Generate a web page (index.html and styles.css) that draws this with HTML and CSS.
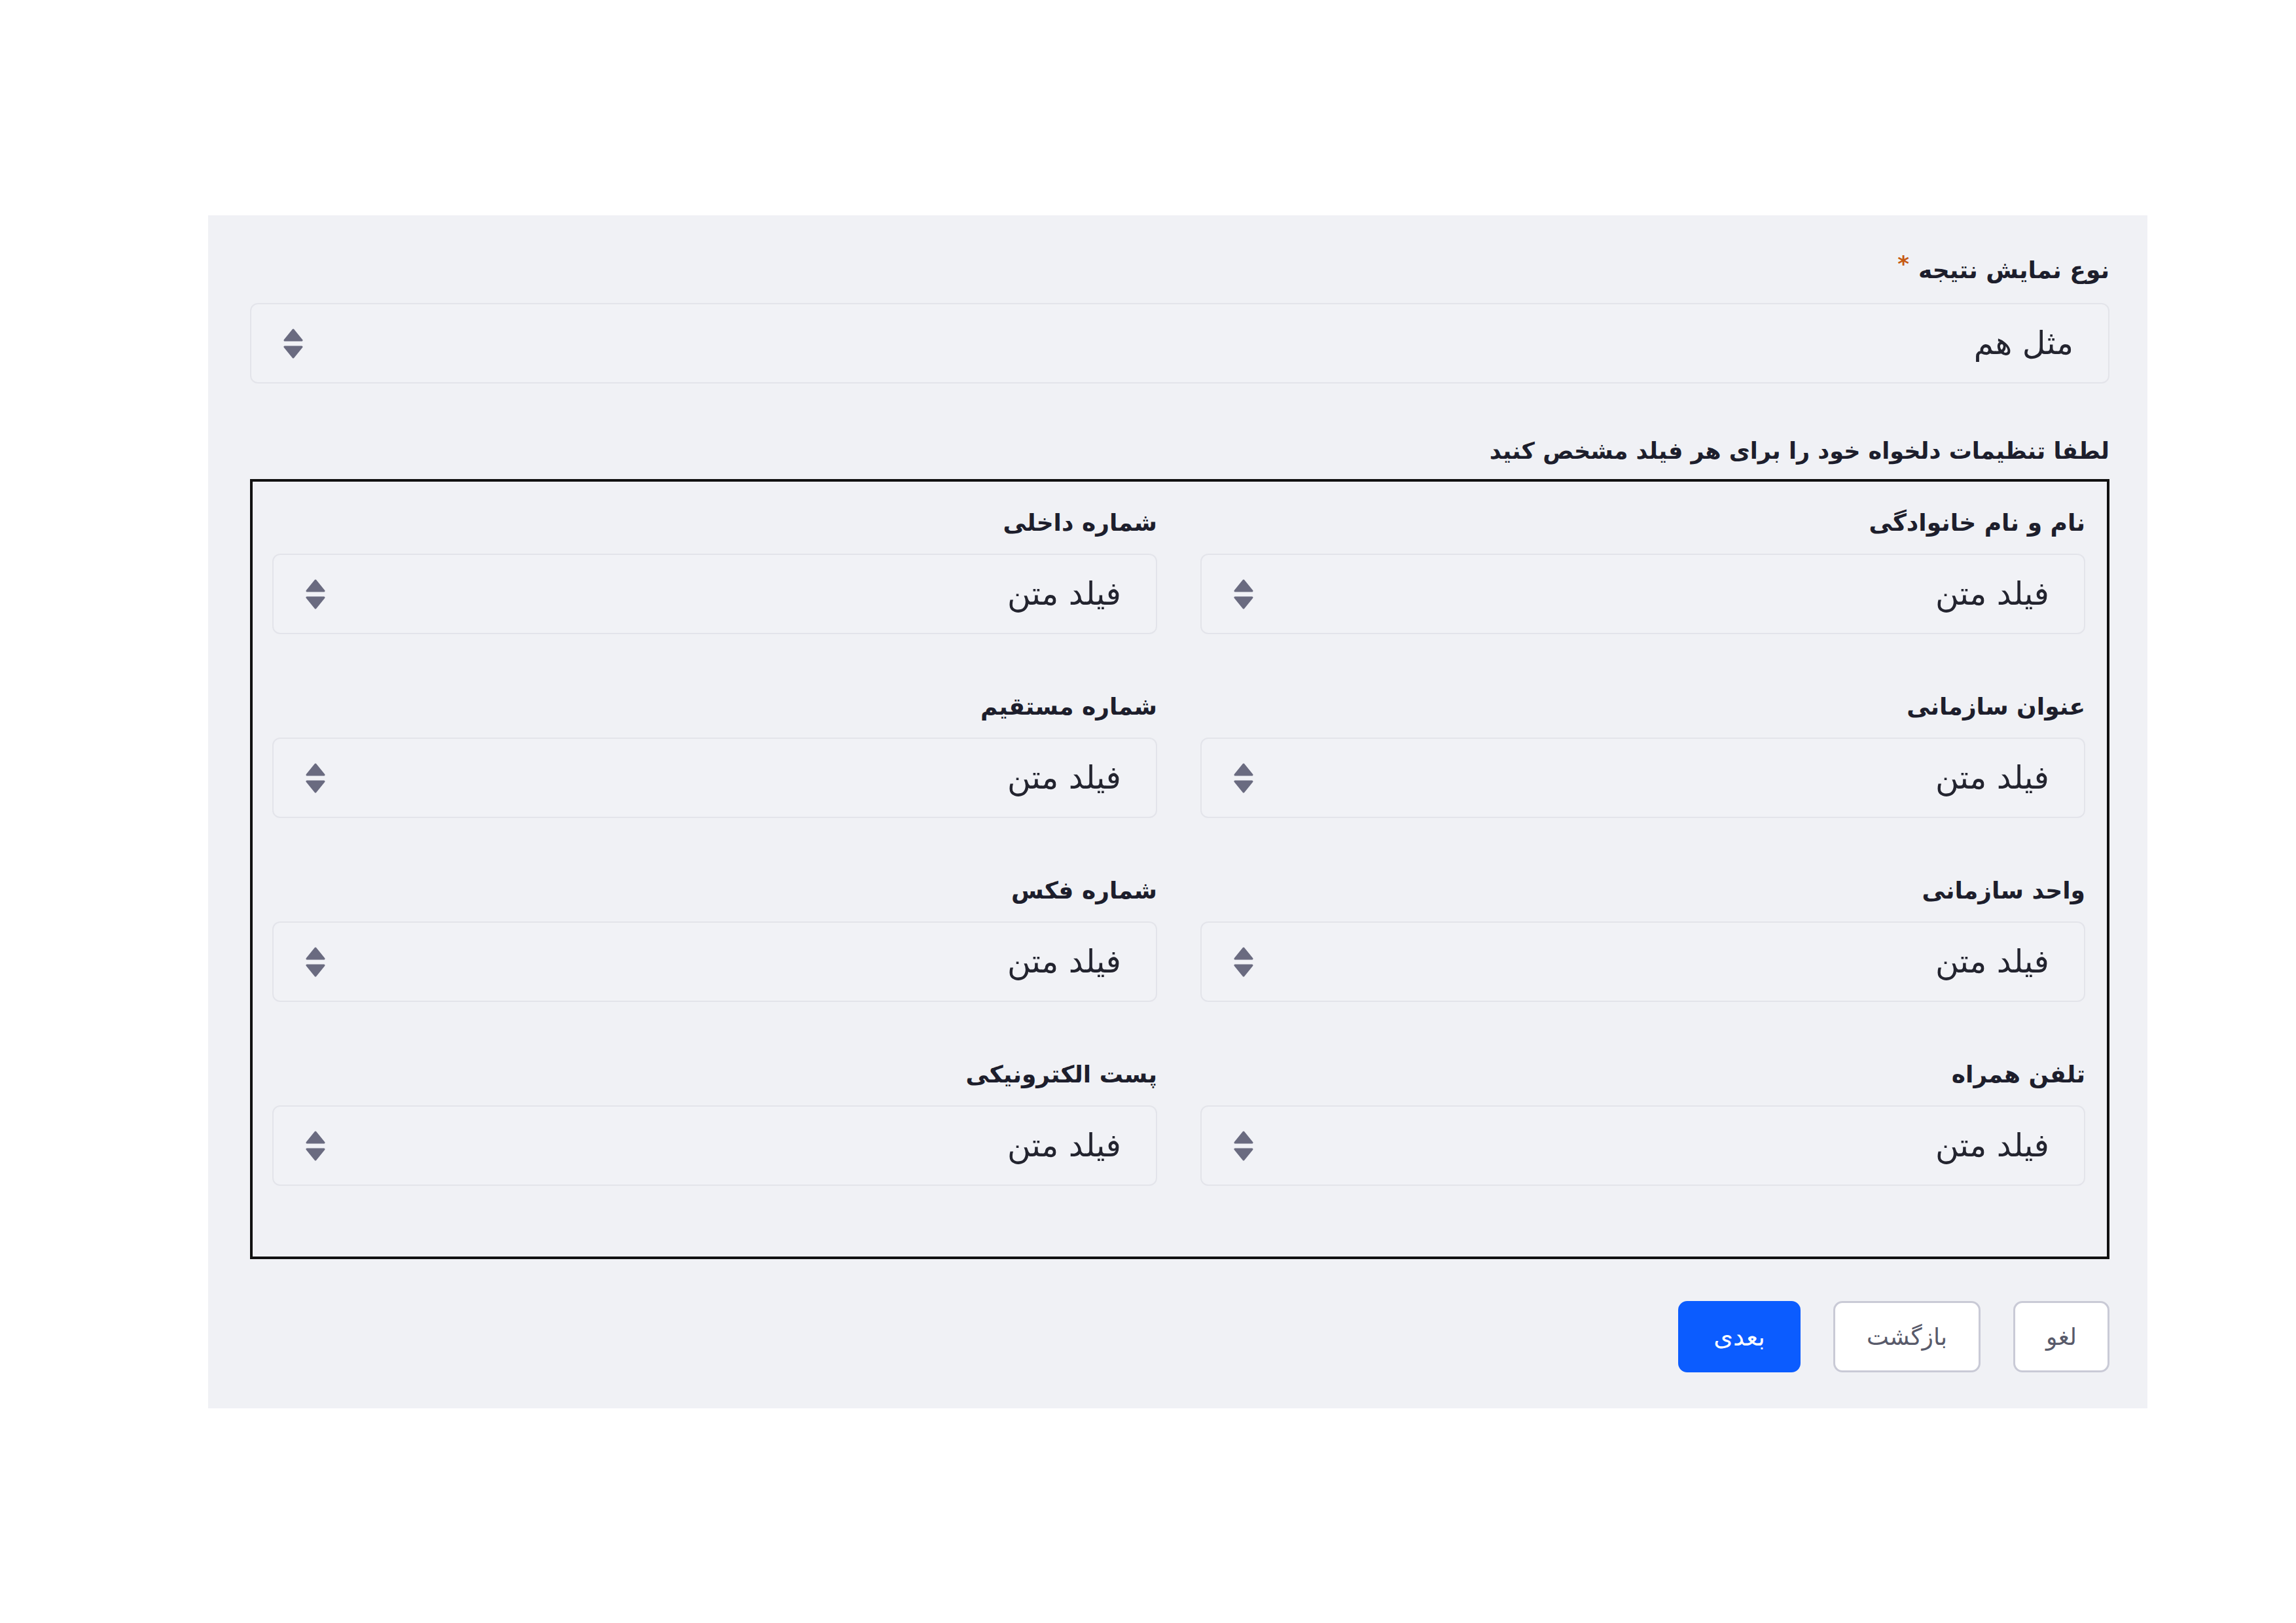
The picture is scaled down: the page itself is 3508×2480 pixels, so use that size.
FILE: index.html
```html
<!DOCTYPE html>
<html lang="fa" dir="rtl">
<head>
<meta charset="utf-8">
<title>تنظیمات نمایش نتیجه</title>
<link rel="stylesheet" href="styles.css">
</head>
<body>
<div class="page">
  <section class="panel">
    <div class="field-label main-label">نوع نمایش نتیجه<span class="req">*</span></div>
    <div class="select">
      <span class="select-text">مثل هم</span>
      <svg class="arrows" viewBox="0 0 30 46"><path d="M15 2 L28 18 L2 18 Z"/><path d="M2 28 L28 28 L15 44 Z"/></svg>
    </div>

    <div class="field-label hint">لطفا تنظیمات دلخواه خود را برای هر فیلد مشخص کنید</div>
    <div class="fields-box">
      <div class="field">
        <div class="field-label">نام و نام خانوادگی</div>
        <div class="select"><span class="select-text">فیلد متن</span><svg class="arrows" viewBox="0 0 30 46"><path d="M15 2 L28 18 L2 18 Z"/><path d="M2 28 L28 28 L15 44 Z"/></svg></div>
      </div>
      <div class="field">
        <div class="field-label">شماره داخلی</div>
        <div class="select"><span class="select-text">فیلد متن</span><svg class="arrows" viewBox="0 0 30 46"><path d="M15 2 L28 18 L2 18 Z"/><path d="M2 28 L28 28 L15 44 Z"/></svg></div>
      </div>
      <div class="field">
        <div class="field-label">عنوان سازمانی</div>
        <div class="select"><span class="select-text">فیلد متن</span><svg class="arrows" viewBox="0 0 30 46"><path d="M15 2 L28 18 L2 18 Z"/><path d="M2 28 L28 28 L15 44 Z"/></svg></div>
      </div>
      <div class="field">
        <div class="field-label">شماره مستقیم</div>
        <div class="select"><span class="select-text">فیلد متن</span><svg class="arrows" viewBox="0 0 30 46"><path d="M15 2 L28 18 L2 18 Z"/><path d="M2 28 L28 28 L15 44 Z"/></svg></div>
      </div>
      <div class="field">
        <div class="field-label">واحد سازمانی</div>
        <div class="select"><span class="select-text">فیلد متن</span><svg class="arrows" viewBox="0 0 30 46"><path d="M15 2 L28 18 L2 18 Z"/><path d="M2 28 L28 28 L15 44 Z"/></svg></div>
      </div>
      <div class="field">
        <div class="field-label">شماره فکس</div>
        <div class="select"><span class="select-text">فیلد متن</span><svg class="arrows" viewBox="0 0 30 46"><path d="M15 2 L28 18 L2 18 Z"/><path d="M2 28 L28 28 L15 44 Z"/></svg></div>
      </div>
      <div class="field">
        <div class="field-label">تلفن همراه</div>
        <div class="select"><span class="select-text">فیلد متن</span><svg class="arrows" viewBox="0 0 30 46"><path d="M15 2 L28 18 L2 18 Z"/><path d="M2 28 L28 28 L15 44 Z"/></svg></div>
      </div>
      <div class="field">
        <div class="field-label">پست الکترونیکی</div>
        <div class="select"><span class="select-text">فیلد متن</span><svg class="arrows" viewBox="0 0 30 46"><path d="M15 2 L28 18 L2 18 Z"/><path d="M2 28 L28 28 L15 44 Z"/></svg></div>
      </div>
    </div>

    <div class="actions">
      <button class="btn btn-light btn-cancel">لغو</button>
      <button class="btn btn-light btn-back">بازگشت</button>
      <button class="btn btn-primary btn-next">بعدی</button>
    </div>
  </section>
</div>
</body>
</html>
```

FILE: styles.css
```css
html, body {
  margin: 0;
  padding: 0;
  background: #ffffff;
}

body {
  width: 3508px;
  height: 2480px;
  font-family: "DejaVu Sans", "Noto Sans", sans-serif;
  color: #1d1e2c;
}

.page {
  padding-top: 329px;
  padding-left: 318px;
  direction: ltr;
}

.panel {
  direction: rtl;
  width: 2963px;
  height: 1823px;
  box-sizing: border-box;
  background: #f0f1f5;
  padding: 56px 58px 55px 64px;
  display: flex;
  flex-direction: column;
}

.field-label {
  font-size: 36px;
  font-weight: bold;
  line-height: 56px;
  height: 56px;
  color: #1d1e2c;
  white-space: nowrap;
}

.main-label {
  margin-bottom: 22px;
}

.req {
  color: #c65a12;
  font-size: 34px;
  margin-right: 14px;
  position: relative;
  top: -10px;
}

.select {
  height: 123px;
  box-sizing: border-box;
  border: 2px solid #e3e4ea;
  border-radius: 12px;
  background: #f1f2f6;
  display: flex;
  align-items: center;
  justify-content: space-between;
  padding: 0 53px 0 49px;
}

.select-text {
  font-size: 49px;
  color: #23242f;
  white-space: nowrap;
}

.arrows {
  width: 30px;
  height: 46px;
  flex: none;
}

.arrows path {
  fill: #6a6b80;
  stroke: #6a6b80;
  stroke-width: 3;
  stroke-linejoin: round;
}

.hint {
  font-size: 35px;
  margin-top: 75px;
  margin-bottom: 15px;
}

.fields-box {
  border: 4px solid #111111;
  box-sizing: border-box;
  height: 1192px;
  padding: 35px 33px 0 30px;
  display: grid;
  grid-template-columns: 1fr 1fr;
  column-gap: 66px;
  row-gap: 83px;
  align-content: start;
}

.field .field-label {
  margin-bottom: 19px;
}

.actions {
  margin-top: 64px;
  display: flex;
  gap: 50px;
}

.btn {
  height: 109px;
  box-sizing: border-box;
  border-radius: 14px;
  font-family: "DejaVu Sans", "Noto Sans", sans-serif;
  font-size: 36px;
  cursor: pointer;
}

.btn-light {
  background: #ffffff;
  border: 3px solid #c9cad6;
  color: #585a6a;
}

.btn-primary {
  background: #0b5cff;
  border: 3px solid #0b5cff;
  color: #ffffff;
  font-weight: normal;
  font-size: 38px;
}

.btn-cancel { width: 147px; }
.btn-back { width: 225px; }
.btn-next { width: 187px; }
```
